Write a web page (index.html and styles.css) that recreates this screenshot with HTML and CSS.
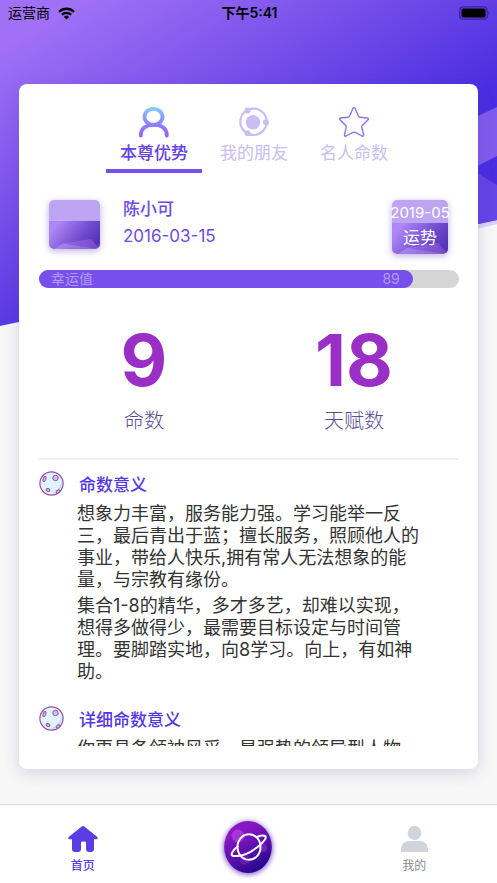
FILE: index.html
```html
<!DOCTYPE html>
<html lang="zh-CN">
<head>
<meta charset="utf-8">
<meta name="viewport" content="width=device-width, initial-scale=1">
<title>本尊优势</title>
<link rel="stylesheet" href="styles.css">
</head>
<body>
<svg class="backdrop" viewBox="0 0 497 330" preserveAspectRatio="none" aria-hidden="true">
  <defs>
    <linearGradient id="sky" gradientUnits="userSpaceOnUse" x1="0" y1="50" x2="147" y2="295">
      <stop offset="0" stop-color="#a070f6"/><stop offset=".5" stop-color="#7750ea"/><stop offset="1" stop-color="#4a2de0"/>
    </linearGradient>
  </defs>
  <path fill="#ddd0f7" d="M497 224 440 238V220H497z"/>
  <path fill="url(#sky)" d="M0 0H497V220L0 326z"/>
  <path fill="#7f5bee" d="M497 107 440 134V185L497 156z"/>
  <path fill="#6544e8" d="M440 150 497 185V220L440 232z"/>
</svg>

<div class="screen">
  <header class="status">
    <span class="carrier">运营商
      <svg width="17" height="13" viewBox="0 0 17 13" aria-hidden="true">
        <g fill="none" stroke="#000" stroke-width="2.3"><path d="M1 4.8a10.8 10.8 0 0 1 15 0"/><path d="M3.9 7.8a6.6 6.6 0 0 1 9.2 0"/></g>
        <path d="M8.5 12.5 5.9 9.900a3.700 3.700 0 0 1 5.200 0z"/>
      </svg>
    </span>
    <span class="clock">下午5:41</span>
    <svg class="battery" width="32" height="14" viewBox="0 0 32 14" aria-hidden="true">
      <rect x=".8" y=".8" width="27.4" height="12.4" rx="3.4" fill="none" stroke="#3a239b" stroke-width="1.2"/>
      <rect x="2.500" y="2.500" width="24" height="9" rx="1.5"/>
      <path fill="#3a239b" d="M29.5 4.5q2 2.500 0 5z"/>
    </svg>
  </header>

  <main class="card">
    <nav class="tabs">
      <button class="tab active" type="button">
        <svg width="32" height="32" viewBox="0 0 32 32" aria-hidden="true">
          <defs><linearGradient id="person" gradientUnits="userSpaceOnUse" x1="16" y1="1" x2="16" y2="31">
            <stop offset="0" stop-color="#83ccff"/><stop offset=".5" stop-color="#8c84fb"/><stop offset="1" stop-color="#9b5cf8"/></linearGradient></defs>
          <g fill="none" stroke="url(#person)" stroke-width="3.800" stroke-linecap="round"><ellipse cx="15.500" cy="9.800" rx="9" ry="8"/><path d="M2.800 28.500c0-7 5-10.700 13-10.700s13 3.700 13 10.700"/></g>
        </svg>
        <span>本尊优势</span>
      </button>
      <button class="tab" type="button">
        <svg width="32" height="32" viewBox="0 0 32 32" aria-hidden="true">
          <circle cx="15.500" cy="14.800" r="13.200" fill="none" stroke="#c9bdf1" stroke-width="2.200"/>
          <g fill="#c9bdf1"><circle cx="15" cy="15.300" r="7.200"/><circle cx="9.500" cy="3.500" r="3"/><circle cx="28" cy="15.300" r="3"/><circle cx="9.500" cy="26.300" r="3"/></g>
        </svg>
        <span>我的朋友</span>
      </button>
      <button class="tab" type="button">
        <svg width="32" height="32" viewBox="0 0 32 32" aria-hidden="true">
          <path fill="none" stroke="#8d74e8" stroke-width="1.400" stroke-linejoin="round" d="M15 1.300q1-1.800 2 0l3.500 7.900q.4.900 1.400 1l7.600.8q1.800.4.500 1.700l-5.700 5.700q-.7.700-.5 1.700l1.800 7.700q.2 1.900-1.500 1.200l-7-3.600q-1.100-.5-2.200 0L8 29q-1.700.7-1.500-1.200l1.700-7.700q.2-1-.5-1.700L2 12.700q-1.300-1.300.5-1.700l7.600-.8q1-.1 1.400-1z"/>
        </svg>
        <span>名人命数</span>
      </button>
    </nav>

    <section class="profile">
      <svg class="tile avatar" viewBox="0 0 56 54" preserveAspectRatio="none" aria-hidden="true">
        <defs><linearGradient id="tile" x1="0" y1=".2" x2="1" y2=".65">
          <stop offset=".1" stop-color="#ad86f8"/><stop offset=".65" stop-color="#704bce"/><stop offset="1" stop-color="#5632b7"/></linearGradient></defs>
        <path fill="#bda5f4" d="M0 0h56v23H0z"/><path fill="url(#tile)" d="M0 23h56v31H0z"/>
        <path fill="#fff" fill-opacity=".18" d="M6 54 15 48 54 54z"/><path fill="#c58cff" fill-opacity=".3" d="M15 48 46 43 56 54H6z"/>
      </svg>
      <div class="who">
        <strong>陈小可</strong>
        <span>2016-03-15</span>
      </div>
      <button class="fortune" type="button">
        <svg class="tile" viewBox="0 0 56 54" preserveAspectRatio="none" aria-hidden="true">
          <path fill="#bda5f4" d="M0 0h56v23H0z"/><path fill="url(#tile)" d="M0 23h56v31H0z"/>
          <path fill="#fff" fill-opacity=".18" d="M6 54 15 48 54 54z"/><path fill="#c58cff" fill-opacity=".3" d="M15 48 46 43 56 54H6z"/>
        </svg>
        <span class="month">2019-05</span>
        <span class="luck">运势</span>
      </button>
    </section>

    <div class="meter"><div class="fill" style="width:89%"><span>幸运值</span><span>89</span></div></div>

    <section class="numbers">
      <div><b>9</b><span>命数</span></div>
      <div><b>18</b><span>天赋数</span></div>
    </section>

    <div class="reading">
      <article>
        <h2>
          <svg width="25" height="25" viewBox="0 0 25 25" aria-hidden="true">
            <defs><g id="moon"><circle cx="12.500" cy="12.500" r="11.600" fill="#dff4fe" stroke="#9a4ba8" stroke-width="1.200"/>
            <path fill="#b9d4e4" d="M23 9c1 7-4 13-11 14 6-3 10-7 11-14z"/>
            <g fill="#c9c8e2" stroke="#9a4ba8"><ellipse cx="5.500" cy="8" rx="1.300" ry="2.600" transform="rotate(18 5.500 8)"/><circle cx="16.500" cy="7" r="2.700"/><ellipse cx="9" cy="19" rx="2" ry="1.400" transform="rotate(25 9 19)"/><ellipse cx="19" cy="20.500" rx="2" ry="1.300" transform="rotate(-35 19 20.500)"/></g></g></defs>
            <use href="#moon"/>
          </svg>
          命数意义
        </h2>
        <p>想象力丰富，服务能力强。学习能举一反三，最后青出于蓝；擅长服务，照顾他人的事业，带给人快乐,拥有常人无法想象的能量，与宗教有缘份。</p>
        <p>集合1-8的精华，多才多艺，却难以实现，想得多做得少，最需要目标设定与时间管理。要脚踏实地，向8学习。向上，有如神助。</p>
      </article>
      <article>
        <h2>
          <svg width="25" height="25" viewBox="0 0 25 25" aria-hidden="true"><use href="#moon"/></svg>
          详细命数意义
        </h2>
        <p>你更具备领袖风采，是强势的领导型人物，</p>
      </article>
    </div>
  </main>

  <nav class="bottom">
    <a class="item current" href="#home">
      <svg width="30" height="28" viewBox="0 0 30 28" aria-hidden="true"><path fill="#5a3de3" d="M14 1.300q1-.8 2 0l13 10.500q1.500 1.500 0 2.500h-3V24q0 3-3 3h-2q-3 0-3-3v-6q0-1.500-1-1.500h-3q-1 0-1 1.500v6q0 3-3 3H7q-3 0-3-3v-9.700H1q-1.500-1 0-2.500z"/></svg>
      <span>首页</span>
    </a>
    <a class="item planet" href="#planet" aria-label="星球">
      <svg width="64" height="64" viewBox="0 0 64 64" aria-hidden="true">
        <defs>
          <linearGradient id="orb" x1=".3" y1="0" x2=".8" y2="1"><stop offset=".15" stop-color="#8a16c6"/><stop offset=".55" stop-color="#5910ac"/><stop offset="1" stop-color="#1c0584"/></linearGradient>
          <filter id="glow" x="-30%" y="-30%" width="160%" height="160%"><feGaussianBlur stdDeviation="2.500"/></filter>
        </defs>
        <ellipse cx="32" cy="33" rx="25" ry="27" fill="#7d4cc7" opacity=".8" filter="url(#glow)"/>
        <ellipse cx="32" cy="32" rx="23.800" ry="26" fill="url(#orb)"/>
        <g fill="#d45cf0" opacity=".45"><circle cx="22" cy="21" r="6.500"/><circle cx="47" cy="33" r="4" opacity=".6"/><circle cx="29" cy="45" r="5" opacity=".4"/></g>
        <g fill="none" stroke="#fff" stroke-width="2" stroke-linecap="round"><ellipse cx="33" cy="32" rx="11.500" ry="12.800"/>
        <path d="M21.500 31.500c-5 4-8 9-4 9.500 8 .8 17-3.500 24-9 6-4.700 10-9.700 7.500-11-1.500-.8-4.500-.4-7.500.8"/></g>
      </svg>
    </a>
    <a class="item" href="#me">
      <svg width="30" height="28" viewBox="0 0 30 28" aria-hidden="true"><g fill="#d0d5dc"><ellipse cx="15.500" cy="8" rx="6.800" ry="7.200"/><path d="M2 27v-2c0-6 4-9 8-9h11c4 0 8 3 8 9v2z"/></g></svg>
      <span>我的</span>
    </a>
  </nav>
</div>
</body>
</html>
```

FILE: styles.css
```css
* { box-sizing: border-box; }

body {
  margin: 0;
  background: #f7f7f7;
  color: #333;
  font-family: Inter, "Noto Sans CJK SC", sans-serif;
  font-optical-sizing: none;
}

button {
  padding: 0;
  border: 0;
  background: none;
  font: inherit;
  font-optical-sizing: none;
  cursor: pointer;
}

svg { display: block; flex: none; }

.backdrop {
  position: absolute;
  top: 0;
  left: 0;
  width: 100%;
  height: 330px;
}

.screen {
  position: relative;
  display: flex;
  flex-direction: column;
  height: 100vh;
}

.status {
  display: grid;
  grid-template-columns: 1fr auto 1fr;
  align-items: center;
  height: 26px;
  padding: 0 6px 0 8px;
  color: #000;
  font-size: 14px;
  line-height: 24px;
}

.carrier {
  display: flex;
  align-items: center;
  gap: 8px;
}

.clock { font-weight: 600; }
.battery { justify-self: end; }

.card {
  flex: 1;
  display: flex;
  flex-direction: column;
  min-height: 0;
  margin: 58px 19px 35px;
  padding: 23px 19px 23px 20px;
  border-radius: 8px;
  background: #fff;
  box-shadow: 0 4px 16px rgba(80, 70, 150, 0.2);
}

.tabs {
  display: flex;
  justify-content: center;
  gap: 4px;
  padding-left: 10px;
}

.tab {
  display: flex;
  flex-direction: column;
  align-items: center;
  gap: 2px;
  width: 96px;
  padding-bottom: 4px;
  border-bottom: 4px solid transparent;
  color: #c9bdf1;
  font-size: 17px;
  line-height: 24px;
}

.tab.active {
  border-color: #7650ea;
  color: #6541e0;
  font-weight: 500;
}

.profile {
  display: flex;
  align-items: flex-start;
  margin-top: 27px;
  padding: 0 11px 0 10px;
}

.tile {
  border-radius: 5px;
  box-shadow: 0 2px 7px rgba(90, 60, 190, 0.4);
}

.avatar {
  width: 51px;
  height: 49px;
}

.who {
  flex: 1;
  display: flex;
  flex-direction: column;
  margin: -4px 0 0 23px;
  color: #6b4be3;
  font-size: 17px;
  line-height: 27px;
}

.who strong { font-weight: 500; }

.fortune {
  display: grid;
  grid-template: 26px 24px 4px / 56px;
  justify-content: center;
  justify-items: center;
  align-items: center;
  color: #fff;
  line-height: 24px;
  white-space: nowrap;
}

.fortune .tile {
  grid-area: 1 / 1 / 4 / 2;
  width: 56px;
  height: 54px;
}

.month { grid-area: 1 / 1; font-size: 15px; }
.luck { grid-area: 2 / 1; font-size: 17px; }

.meter {
  margin-top: 16px;
  border-radius: 9px;
  background: #d5d5d5;
}

.fill {
  display: flex;
  justify-content: space-between;
  height: 18px;
  padding: 0 13px 0 12px;
  border-radius: 9px;
  background: #774fea;
  color: #b29cf3;
  font-size: 14px;
  line-height: 18px;
}

.numbers {
  display: grid;
  grid-template-columns: 1fr 1fr;
  margin-top: 30px;
  padding-bottom: 22px;
  border-bottom: 2px solid #f0f0f0;
  text-align: center;
}

.numbers div { display: flex; flex-direction: column; }

.numbers b {
  color: #9a2fc6;
  font-size: 72px;
  line-height: 84px;
}

.numbers span {
  margin-top: 4px;
  color: #5a4b96;
  font-size: 20px;
  font-weight: 300;
  line-height: 30px;
}

.reading {
  flex: 1;
  min-height: 0;
  overflow: hidden;
  padding-top: 11px;
}

.reading article { margin-bottom: 23px; }

.reading h2 {
  display: flex;
  align-items: center;
  gap: 15px;
  height: 24px;
  margin: 0 0 8px;
  color: #5537e3;
  font-size: 17px;
  font-weight: 500;
}

.reading p {
  margin: 0 36px 4px 38px;
  font-size: 18px;
  line-height: 22px;
}

.bottom {
  display: grid;
  grid-template-columns: repeat(3, 1fr);
  height: 79px;
  border-top: 1px solid #d9d9d9;
  background: #fff;
}

.item {
  display: flex;
  flex-direction: column;
  align-items: center;
  padding-top: 20px;
  color: #8a8a8a;
  font-size: 12px;
  line-height: 18px;
  text-decoration: none;
}

.item span { margin-top: 4px; }
.current { color: #5a3de3; font-weight: 500; }
.planet { padding-top: 10px; }
```
